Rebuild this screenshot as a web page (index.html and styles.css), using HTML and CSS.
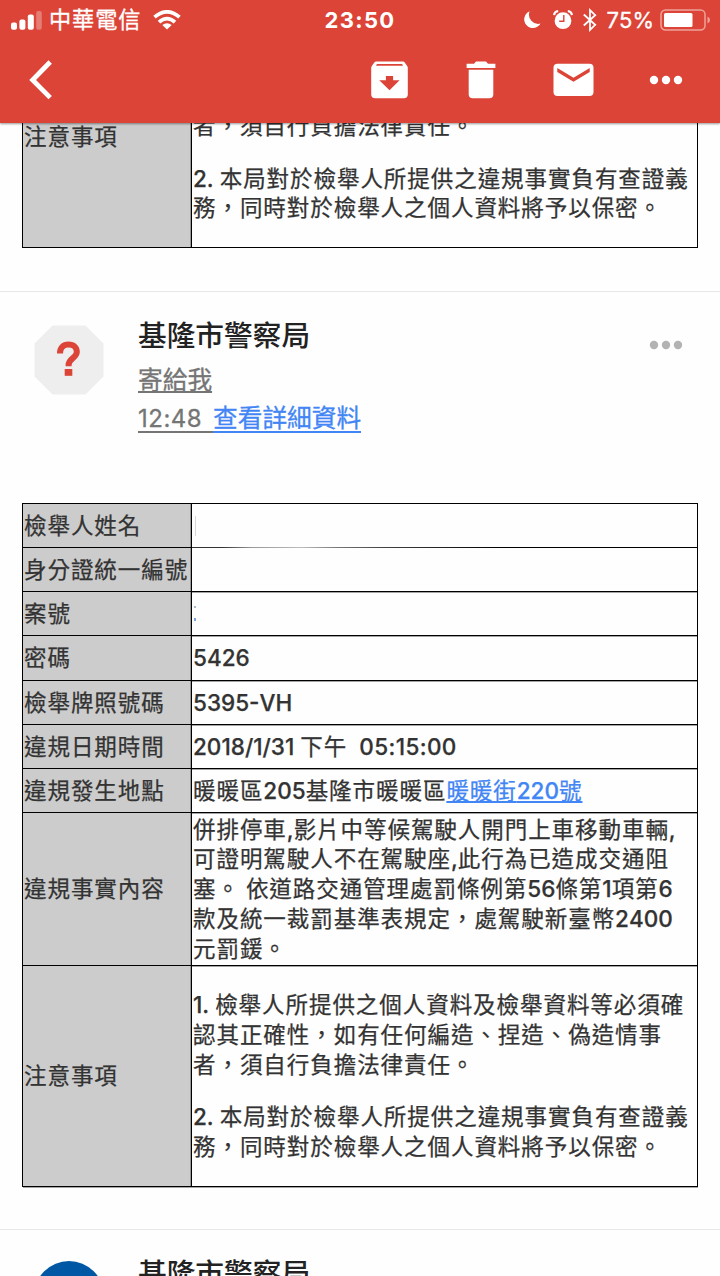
FILE: index.html
```html
<!DOCTYPE html>
<html lang="zh-Hant">
<head>
<meta charset="utf-8">
<title>基隆市警察局</title>
<link rel="stylesheet" href="styles.css">
</head>
<body>
<div class="screen">
<header class="header">
  <div class="status">
    <div class="carrier">
      <svg class="signal" width="31" height="20" viewBox="0 0 31 20" fill="#fff"><rect x="0" y="12.6" width="6" height="7.2" rx="2"/><rect x="8.4" y="9.4" width="6" height="10.4" rx="2"/><rect x="16.8" y="4.6" width="6" height="15.2" rx="2"/><rect x="25.2" y="1" width="5.6" height="18.8" rx="2" opacity=".3"/></svg>
      <span class="carrier-name">中華電信</span>
      <svg class="wifi" width="28" height="20" viewBox="0 0 28 20" fill="none" stroke="#fff" stroke-width="3.7"><path d="M1.5 7.2Q14-3.5 26.5 7.2"/><path d="M6 12.2Q14 5 22 12.2"/><path d="M14 19.5L9.3 15.1Q14 11.6 18.7 15.1Z" fill="#fff" stroke="none"/></svg>
    </div>
    <div class="clock">23:50</div>
    <div class="indicators">
      <svg class="moon" width="18" height="18" viewBox="0 0 18 18" fill="#fff"><path d="M6.6.3A8.7 8.7 0 1 0 17.5 12.6A9.3 9.3 0 0 1 6.6.3Z"/></svg>
      <svg class="alarm" width="20" height="20" viewBox="0 0 20 20"><circle cx="10" cy="10.7" r="8.4" fill="#fff"/><path d="M1.1 5.1Q1.5 1.4 5.2 1.1M18.9 5.1Q18.5 1.4 14.8 1.1" stroke="#fff" stroke-width="2.2" fill="none"/><path d="M10.8 5.1V11.3H6.2" stroke="#db4437" stroke-width="1.4" fill="none"/></svg>
      <svg class="bt" width="14" height="24" viewBox="0 0 14 24" fill="none" stroke="#fff" stroke-width="1.8"><path d="M.8 6.5L12.2 16.8L7 21.8V2.2L12.2 7.2L.8 17.5"/></svg>
      <span class="percent">75%</span>
      <svg class="battery" width="51" height="22" viewBox="0 0 51 22"><rect x="1" y="1" width="44" height="20" rx="4.5" fill="none" stroke="#f0a29a" stroke-width="1.5"/><rect x="4" y="4" width="28.5" height="14" rx="1.5" fill="#fff"/><path d="M47.5 7.5Q50 8.5 50 11T47.5 14.5Z" fill="#f0a29a"/></svg>
    </div>
  </div>
  <nav class="toolbar">
    <svg class="back" width="24" height="42" viewBox="0 0 24 42" fill="none" stroke="#fff" stroke-width="4.8"><path d="M21.2 3L3.6 21L21.2 38.6"/></svg>
    <div class="actions">
      <svg width="37" height="38" viewBox="0 0 37 38"><path d="M5 .6H32Q33 .6 33.7 1.5L36.2 4.9Q36.8 5.8 36.8 7V33.2Q36.8 37.2 32.8 37.2H4.2Q.2 37.2.2 33.2V7Q.2 5.8.8 4.9L3.3 1.5Q4 .6 5 .6Z" fill="#fff"/><path d="M5.9 3H31.1L32 4.7H5Z" fill="#db4437"/><path d="M14.9 15H22.1V19.3H28.6L18.5 29.3L8.3 19.3H14.9Z" fill="#db4437"/></svg>
      <svg width="30" height="38" viewBox="0 0 30 38" fill="#fff"><path d="M.6 7V2.7H8L10 .6H20L22 2.7H29.4V7Z"/><path d="M2.7 8.8H27.3V33.2Q27.3 37.2 23.3 37.2H6.7Q2.7 37.2 2.7 33.2Z"/></svg>
      <svg width="41" height="34" viewBox="0 0 41 34"><rect x=".5" y=".7" width="40" height="32.3" rx="4" fill="#fff"/><path d="M4.3 5.1L20.5 14.8L36.7 5.1V8.9L20.5 18.7L4.3 8.9Z" fill="#db4437"/></svg>
      <svg width="34" height="10" viewBox="0 0 34 10" fill="#fff"><circle cx="5" cy="5" r="4.2"/><circle cx="17" cy="5" r="4.2"/><circle cx="29" cy="5" r="4.2"/></svg>
    </div>
  </nav>
</header>

<section class="previous">
  <div class="report">
    <div class="label">注意事項</div>
    <div class="value notes">
      <p>者，須自行負擔法律責任。</p>
      <p><span class="n">2. </span>本局對於檢舉人所提供之違規事實負有查證義<br>務，同時對於檢舉人之個人資料將予以保密。</p>
    </div>
  </div>
</section>

<section class="message">
  <div class="sender">
    <svg class="avatar" width="70" height="70" viewBox="0 0 70 70"><path d="M18.5 .5H51.5L69.5 18.5V51.5L51.5 69.5H18.5L.5 51.5V18.5Z" fill="#eee"/><path d="M26 28.4C26 22.8 29.3 19.6 34.5 19.6C39.8 19.6 42.8 22.6 42.8 27C42.8 33 34.6 33.4 34.6 40V41.2" fill="none" stroke="#db4437" stroke-width="6"/><rect x="30.7" y="44" width="7.6" height="6.8" fill="#db4437"/></svg>
    <div class="who">
      <div class="name">基隆市警察局</div>
      <div class="to"><u>寄給我</u></div>
      <div class="details"><span class="time">12:48</span><span class="more">查看詳細資料</span></div>
    </div>
    <svg class="dots" width="34" height="10" viewBox="0 0 34 10" fill="#b3b3b3"><circle cx="5" cy="5" r="4.2"/><circle cx="17" cy="5" r="4.2"/><circle cx="29" cy="5" r="4.2"/></svg>
  </div>
  <div class="report full">
    <div class="label">檢舉人姓名</div><div class="value erased"><i class="trace"></i></div>
    <div class="label">身分證統一編號</div><div class="value"></div>
    <div class="label">案號</div><div class="value"><i class="trace blue"></i></div>
    <div class="label">密碼</div><div class="value"><span class="n">5426</span></div>
    <div class="label">檢舉牌照號碼</div><div class="value"><span class="n">5395-VH</span></div>
    <div class="label">違規日期時間</div><div class="value"><span class="n">2018/1/31 </span>下午<span class="n hour">05:15:00</span></div>
    <div class="label">違規發生地點</div><div class="value">暖暖區<span class="n">205</span>基隆市暖暖區<span class="place">暖暖街<span class="n">220</span>號</span></div>
    <div class="label">違規事實內容</div>
    <div class="value"><p>併排停車<span class="n">,</span>影片中等候駕駛人開門上車移動車輛<span class="n">,</span><br>可證明駕駛人不在駕駛座<span class="n">,</span>此行為已造成交通阻<br>塞。<span class="n"> </span>依道路交通管理處罰條例第<span class="n">56</span>條第<span class="n">1</span>項第<span class="n">6</span><br>款及統一裁罰基準表規定，處駕駛新臺幣<span class="n">2400</span><br>元罰鍰。</p></div>
    <div class="label">注意事項</div>
    <div class="value notes">
      <p><span class="n">1. </span>檢舉人所提供之個人資料及檢舉資料等必須確<br>認其正確性，如有任何編造、捏造、偽造情事<br>者，須自行負擔法律責任。</p>
      <p><span class="n">2. </span>本局對於檢舉人所提供之違規事實負有查證義<br>務，同時對於檢舉人之個人資料將予以保密。</p>
    </div>
  </div>
</section>

<section class="next">
  <div class="circle"></div>
  <div class="name">基隆市警察局</div>
</section>
</div>
</body>
</html>
```
FILE: styles.css
```css
* { box-sizing: border-box; }
body { margin: 0; background: #fefefe; }
.screen {
  width: 720px; height: 1276px; overflow: hidden;
  display: flex; flex-direction: column;
  font-family: "Inter", "Noto Sans CJK TC", sans-serif;
  color: #333;
  font-kerning: none;
}
.screen > * { flex: none; }
svg { display: block; flex: none; }

.header {
  height: 123px; background: #db4437; color: #fff;
  position: relative; z-index: 1;
  box-shadow: 0 1px 2px rgba(0, 0, 0, .4);
}
.status { height: 40px; display: grid; grid-template-columns: 1fr auto 1fr; align-items: center; }
.carrier { display: flex; align-items: center; padding-left: 11px; }
.carrier-name { font-size: 22.2px; letter-spacing: .9px; line-height: 40px; margin: 0 12px 0 7px; -webkit-text-stroke: .3px; }
.clock { font-size: 22px; font-weight: 700; letter-spacing: 1.3px; line-height: 40px; }
.indicators { display: flex; align-items: center; justify-content: flex-end; padding-right: 9px; }
.alarm { margin-left: 12px; }
.bt { margin-left: 10px; }
.percent { font-size: 22px; letter-spacing: 0; line-height: 40px; margin: 0 6px 0 10px; -webkit-text-stroke: .3px; }
.toolbar { height: 80px; display: flex; align-items: center; justify-content: space-between; padding: 0 37px 0 29px; }
.actions { display: flex; align-items: center; gap: 58px; }
.actions svg:nth-child(2) { margin-right: -1px; }
.actions svg:nth-child(4) { margin-left: -3px; }

.previous { height: 125px; display: flex; flex-direction: column; justify-content: flex-end; overflow: hidden; padding: 0 22px; }
.report {
  display: grid; grid-template-columns: 169px 506px; width: 676px; flex: none;
  background: linear-gradient(#000, #000) 0 0 / 1px 100% no-repeat, linear-gradient(#000, #000) 0 0 / 100% 1px no-repeat;
  padding: 1px 0 0 1px;
  font-size: 22.5px; letter-spacing: .95px; line-height: 29.7px;
}
.previous .report { grid-template-rows: 221px; }
.label, .value {
  display: flex; align-items: center; white-space: nowrap;
  border-right: 1px solid #000; border-bottom: 1px solid #000;
  box-shadow: 0 1px 0 rgba(0, 0, 0, .35);
  padding-left: 1px;
  -webkit-text-stroke: .25px;
}
.label { background: #ccc; box-shadow: 0 1px 0 rgba(0, 0, 0, .35), inset -1px 0 0 rgba(0, 0, 0, .25); }
.value { padding-left: 1px; }
.report.full { grid-template-rows: 44px 44px 44px 45px 44px 44px 44px 153px 221px; }
.report p { margin: 0; }
.report .notes { flex-direction: column; align-items: flex-start; justify-content: center; gap: 23px; }
.previous .report .notes { justify-content: flex-end; padding-bottom: 24px; }
.n { font-weight: 500; letter-spacing: 0; white-space: pre; }
.hour { margin-left: 12px; letter-spacing: .4px; }
.place { color: #4285f4; text-decoration: underline; text-decoration-thickness: 2px; text-underline-offset: 2px; }
.trace { width: 1px; height: 20px; margin-left: 2px; background: #d8d8d8; }
.trace.blue { width: 2px; height: 15px; margin-left: 1px; background: linear-gradient(#a9b9d0 2px, transparent 2px 12px, #7ea6dc 12px); }
/* Rule under the blank name fades out part-way along */
.erased {
  border-bottom-color: transparent; box-shadow: none;
  background: linear-gradient(90deg, #333 30px, #999 60px, #bbb 110px, #777 145px, #444 190px, #000 310px) 0 100% / 100% 1px no-repeat border-box;
}

.message { margin-top: 43px; height: 938px; border-top: 1px solid #e8e8e8; padding: 0 22px; }
.sender { height: 211px; display: flex; align-items: flex-start; padding: 0 15px 0 12px; }
.avatar { margin-top: 33px; }
.who { margin-left: 34px; padding-top: 22px; flex: 1; white-space: nowrap; }
.name { font-size: 28.7px; line-height: 44px; font-weight: 500; color: #222; }
.to, .details { font-size: 24.7px; line-height: 39px; color: #757575; -webkit-text-stroke: .3px; }
.to { margin-top: 3px; }
.to u { text-decoration-thickness: 2px; text-underline-offset: 2px; }
.details { display: flex; line-height: 37px; }
.time { width: 75px; height: 33px; border-bottom: 2px solid #757575; font-size: 24px; letter-spacing: .5px; }
.more { height: 33px; border-bottom: 2px solid #4285f4; color: #4285f4; }
.dots { margin-top: 48px; }

.next { border-top: 1px solid #e8e8e8; height: 46px; display: flex; padding: 22px 0 0 34px; }
.circle { width: 70px; height: 70px; border-radius: 50%; background: #0057a4; margin-top: 9px; flex: none; }
.next .name { margin-left: 34px; }
```
